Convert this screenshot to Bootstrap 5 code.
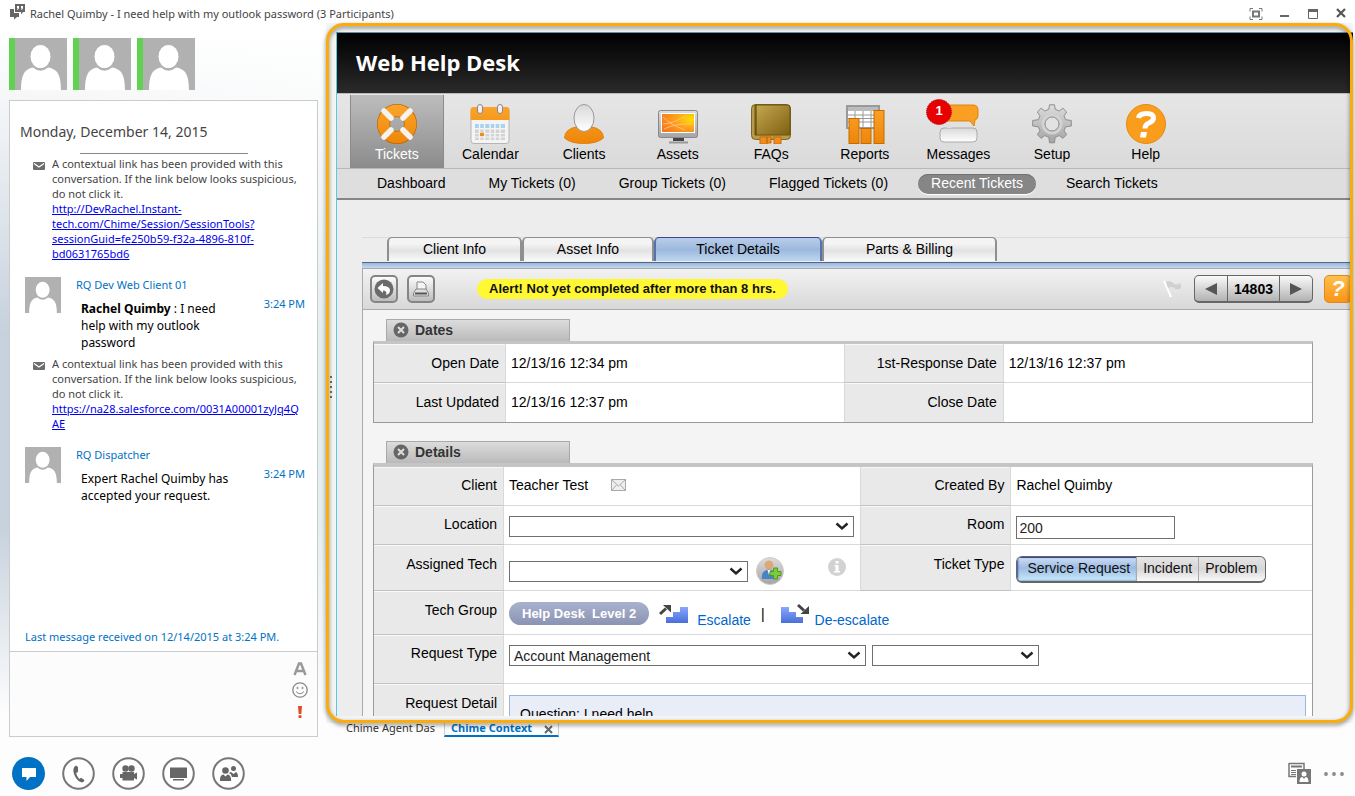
<!DOCTYPE html>
<html lang="en">
<head>
<meta charset="utf-8">
<meta name="viewport" content="width=device-width, initial-scale=1">
<title>Rachel Quimby - I need help with my outlook password</title>
<link href="https://cdn.jsdelivr.net/npm/bootstrap@5.3.0/dist/css/bootstrap.min.css" rel="stylesheet">
<style>
  body {
    font: 12px/15px "Noto Sans", "Open Sans", sans-serif; color: #444;
    background:
      linear-gradient(180deg, #fff 4%, rgba(255,255,255,.75) 15%, rgba(255,255,255,0) 42%, rgba(255,255,255,0) 66%, #fdfdfd 90%),
      linear-gradient(90deg, #c6d1dd 0, #e8efef 330px);
  }
  .win-title { height: 23px; padding: 4px 8px 0 10px; }
  .win-title .caption { font-size: 11px; line-height: 19px; }
  .bare { background: none; border: 0; padding: 0; line-height: 0; color: #666; }
  .bare svg, .tool svg { display: block; }

  /* conversation column */
  .chat-col { flex: 0 0 318px; padding: 15px 0 0 9px; margin-right: 8px; }
  .presence { width: 58px; height: 52px; border-left: 6px solid #5fd24f; background: #b1b1b1; }
  .chat-box { margin-top: 10px; border: 1px solid #c9cbcd; background: #fff; }
  .chat-date { font-size: 14px; line-height: 20px; padding: 21px 10px 11px; }
  .chat-rule { width: 168px; margin-left: 70px; border-top: 1px solid #8a8a8a; }
  .notice { padding: 2px 12px 0 23px; font-size: 11px; }
  .notice > svg { flex: none; margin: 6px 7px 0 0; }
  .notice a { color: #00e; overflow-wrap: anywhere; }
  .msg { padding: 16px 12px 3px 15px; }
  .msg > svg { flex: none; background: #b1b1b1; }
  .msg .who { color: #0072c6; line-height: 16px; margin-left: 15px; font-size: 11px; }
  .msg .said { color: #000; line-height: 17px; margin: 7px 0 0 20px; }
  .msg .when { color: #0072c6; line-height: 16px; margin-top: 19px; font-size: 11px; }
  .last-msg { color: #0072c6; padding: 0 15px 7px; font-size: 11px; }
  .compose { height: 85px; border-top: 1px solid #c9cbcd; background: #fcfcfc; padding: 7px 8px 0 0; }
  .compose textarea { border: 0; background: none; resize: none; outline: 0; }

  /* highlighted context pane */
  .context { padding: 9px 0 0 10px; margin-right: 2px; background: #f4f5f5; }
  .context::after {
    content: ""; position: absolute; inset: 0; border: 3px solid #fbac0b; border-radius: 18px;
    filter: drop-shadow(0 2px 2px rgba(0,0,0,.5)); pointer-events: none;
  }
  .grip { position: absolute; left: 4px; top: 353px; z-index: 2; }
  .desk {
    font: 14px/16px "Liberation Sans", Arial, sans-serif; color: #000; background: #ededed;
    border-top: 1px solid #5f93ad; border-left: 1px solid #5cc8e0; margin-bottom: 7px;
  }
  .desk-head { height: 60px; background: linear-gradient(#000, #2a2a2a); padding-left: 19px; }
  .desk-head h1 { font: bold 22px/58px "Open Sans", "Noto Sans", sans-serif; color: #fff; margin: 0; }
  .desk-nav { height: 76px; padding: 1px 0 0 13px; background: linear-gradient(#e6e6e6, #dadada); border-top: 1px solid #bbb; border-bottom: 1px solid #b8b8b8; }
  .desk-nav ul { display: grid; grid-template-columns: repeat(9, 1fr); width: 84%; height: 100%; }
  .desk-nav a { display: flex; flex-direction: column; align-items: center; height: 100%; padding-top: 9px; color: #000; text-decoration: none; }
  .desk-nav a span { margin-top: 2px; }
  .desk-nav a.active { color: #fff; background: linear-gradient(#bdbdbd, #8b8b8b); border: 1px solid #8b8b8b; border-width: 0 1px; }
  .msg-icon { margin-right: 12px; overflow: visible; }
  .desk-sub { height: 31px; padding: 5px 0 0 27px; background: #dedede; border-bottom: 2px solid #868686; gap: 17px; }
  .desk-sub a { color: #000; text-decoration: none; padding: 1px 13px 3px; height: 20px; white-space: nowrap; }
  .desk-sub a.active { color: #fff; background: #868686; border-radius: 10px; box-shadow: 0 1px 0 #fff, inset 0 1px 0 #6f6f6f; }

  .sheet-wrap { margin: 37px 0 0 25px; }
  .sheet-tabs { height: 25px; border-top: 1px solid #dcdcdc; padding-left: 25px; }
  .sheet-tabs a {
    height: 24px; margin-top: -1px; line-height: 23px; text-align: center; color: #000; text-decoration: none;
    border: 2px solid #8f8f8f; border-bottom: 0; border-top-width: 1px; border-radius: 5px 5px 0 0;
    background: linear-gradient(#f4f4f4 0 25%, #e2e2e2 55%, #fafafa);
  }
  .sheet-tabs a.active { border-color: #35489b #5573ab; background: linear-gradient(#b9cde8, #9db8de 50%, #bcd6f0); }
  .w-a { width: 135px; } .w-b { width: 132px; } .w-c { width: 168px; } .w-d { width: 175px; }
  .blue-rule { height: 6px; border-top: 1px solid #56687f; background: linear-gradient(#9bb5dc, #c3dbee); }
  .sheet { border-left: 1px solid #aaa; background: #f4f4f4; }
  .tools { height: 42px; padding: 0 1px 1px 7px; border-top: 1px solid #aaa; border-bottom: 1px solid #aaa; background: linear-gradient(#f2f2f2, #d8d8d8); }
  .tool { width: 28px; height: 28px; padding: 0; display: flex; align-items: center; justify-content: center; border: 2px solid #858585; border-radius: 5px; background: linear-gradient(#fcfcfc, #bdbdbd); }
  .tool-help { border: 1px solid #d98a1c; background: linear-gradient(#ffc04d, #fb9416); color: #fff; font: italic bold 22px/26px "Liberation Sans", sans-serif; }
  .alert-pill { background: #fff833; border-radius: 10px; color: #111; font-weight: bold; font-size: 13px; line-height: 20px; padding: 0 12px; margin-left: 42px; white-space: nowrap; }
  .pager { height: 28px; border: 1px solid #666; border-bottom-width: 2px; border-radius: 5px; background: linear-gradient(#fafafa, #b2b2b2); overflow: hidden; }
  .pager button { width: 32px; border: 0; background: none; padding: 0; }
  .pager span { width: 53px; border: 1px solid #666; border-width: 0 1px; text-align: center; font-weight: bold; line-height: 26px; }

  .sheet-body { padding: 9px 40px 0 10px; }
  .block-head { width: 184px; height: 22px; margin-left: 13px; padding: 2px 6px 0; border: 1px solid #aaa; border-bottom: 0; background: linear-gradient(#dcdcdc, #bababa); }
  .block-head h2 { font: bold 14px/16px "Liberation Sans", sans-serif; color: #333; margin: 0 0 0 6px; }
  .facts { table-layout: fixed; width: 100%; border-collapse: separate; border-spacing: 0; background: #fff; border: 1px solid #9a9a9a; border-top: 3px solid #c5c5c5; margin-bottom: 18px; }
  .facts.thick { border-top-width: 4px; }
  .facts th, .facts td { vertical-align: top; padding: 10px 6px 0 6px; border-bottom: 1px solid #d9d9d9; font-weight: normal; }
  .facts th { text-align: right; background: #e9e9e9; border-right: 1px solid #d9d9d9; border-bottom-color: #c2c2c2; box-shadow: inset 0 1px 0 #f8f8f8; }
  .facts td + th { border-left: 1px solid #d9d9d9; }
  .facts tr:last-child > * { border-bottom: 0; }
  .facts td { padding-left: 5px; }
  .facts .low > * { padding-top: 11px; }
  .h39 { height: 39px; } .h46 { height: 46px; } .h44 { height: 44px; } .h49 { height: 49px; }
  .l1 { width: 132px; } .v1 { width: 36%; } .l2 { width: 160px; }
  .l3 { width: 130px; } .v3 { width: 38%; } .l4 { width: 151px; }
  .pick {
    appearance: none; height: 21px; padding: 0 4px; border: 1px solid #707070; border-radius: 0; color: #222; font-size: 14px; line-height: 18px;
    background: #fff url("data:image/svg+xml,%3Csvg xmlns='http://www.w3.org/2000/svg' width='14' height='9'%3E%3Cpath d='M1.500 1.500l5.500 5 5.500-5' fill='none' stroke='%23222' stroke-width='2.400'/%3E%3C/svg%3E") no-repeat right 4px center;
    display: block;
  }
  .room { width: 159px; height: 23px; border: 1px solid #707070; padding: 0 2px; color: #222; }
  .kinds { height: 27px; border: 1px solid #666; border-bottom-width: 2px; border-radius: 6px; overflow: hidden; background: linear-gradient(#e6e6e6, #d6d6d6 50%, #fafafa); }
  .kinds label { line-height: 22px; padding: 0 6px; border-left: 1px solid #aaa; color: #111; cursor: pointer; }
  .kinds label:first-of-type { border-left: 0; padding-left: 10px; }
  .kinds .btn-check:checked + label { background: linear-gradient(#cfdff3, #9dbbe3 45%, #c6eafa); box-shadow: inset 0 1px 0 #35489b, inset 1px 0 2px #35489b; }
  .group-pill { background: linear-gradient(#a9b2cd, #8a94b2); color: #fff; font-weight: bold; font-size: 13px; line-height: 23px; border-radius: 12px; padding: 0 13px; white-space: pre; }
  .steps a { color: #0066cc; text-decoration: none; margin-top: 10px; }
  .question { border: 1px solid #9cb6dc; background: #e9edf7; height: 60px; padding: 10px; }

  .page-tabs { height: 14px; font-size: 11px; color: #333; padding-left: 20px; line-height: 10px; }
  .page-tabs .on { color: #0072c6; font-weight: bold; border-bottom: 2px solid #0072c6; border-left: 1px solid #ccc; border-right: 1px solid #ccc; padding: 0 5px 0 6px; margin-left: 9px; }
  .page-tabs a { color: inherit; text-decoration: none; }
  .call-bar { height: 59px; padding: 12px 11px 0 12px; }
  .defs { width: 0; height: 0; }
</style>
</head>
<body class="d-flex flex-column vh-100 overflow-hidden">

<svg class="defs position-absolute" aria-hidden="true">
  <defs>
    <linearGradient id="gOr" gradientUnits="userSpaceOnUse" x1="0" y1="0" x2="0" y2="40"><stop offset="0" stop-color="#fba62c"/><stop offset="1" stop-color="#ee8508"/></linearGradient>
    <linearGradient id="gGold" x1="0" y1="0" x2="1" y2="1"><stop offset="0" stop-color="#c6a94f"/><stop offset="1" stop-color="#7d5f12"/></linearGradient>
    <linearGradient id="gGrey" x1="0" y1="0" x2="0" y2="1"><stop offset="0" stop-color="#ddd"/><stop offset="1" stop-color="#a4a4a4"/></linearGradient>
    <linearGradient id="gWh" x1="0" y1="0" x2="0" y2="1"><stop offset="0" stop-color="#d9d9d9"/><stop offset="1" stop-color="#fff"/></linearGradient>
    <radialGradient id="gScr" cx=".9" cy=".3" r="1"><stop offset="0" stop-color="#ffe000"/><stop offset=".5" stop-color="#ff9d1c"/><stop offset="1" stop-color="#f57a20"/></radialGradient>
    <linearGradient id="gBl" x1="0" y1="0" x2="0" y2="1"><stop offset="0" stop-color="#86a8ff"/><stop offset="1" stop-color="#4a6fd8"/></linearGradient>
    <symbol id="person" viewBox="0 0 52 52"><ellipse cx="25.500" cy="18.500" rx="10" ry="11.500" fill="#fff"/><path d="M6 52C6 36 10 31 18 29.500Q25.500 36 33 29.500C42 31 46 36 46 52z" fill="#fff"/></symbol>
    <symbol id="mail" viewBox="0 0 12 8"><rect width="12" height="8" rx="1" fill="#6d6d6d"/><path d="M1 1.500L6 5l5-3.500" fill="none" stroke="#fff" stroke-width="1.200"/></symbol>
    <symbol id="shut" viewBox="0 0 16 16"><circle cx="8" cy="8" r="7.500" fill="#666"/><path d="M5 5l6 6M11 5l-6 6" stroke="#ddd" stroke-width="2"/></symbol>
  </defs>
</svg>

<header class="win-title d-flex justify-content-between flex-shrink-0">
  <div class="d-flex">
    <svg width="16" height="16" viewBox="0 0 16 16" class="me-1" fill="#666"><path d="M5 0h10v8h-2l-2 2.500V8H5z"/><path d="M0 5h4v4h5v4H7l-3 2.500V13H0z"/><path d="M7 2h2v2.500L7.500 6H7l.8-1.800H7zM11 2h2v2.500L11.500 6H11l.8-1.800H11z" fill="#fff"/></svg>
    <span class="caption">Rachel Quimby - I need help with my outlook password (3 Participants)</span>
  </div>
  <div class="d-flex align-items-center gap-3">
    <button class="bare" aria-label="Full screen"><svg width="14" height="12" viewBox="0 0 14 12" fill="none" stroke="#777"><path d="M1 3.500v-3h3M10 .5h3v3M13 8.500v3h-3M4 11.500H1v-3"/><rect x="4" y="3.500" width="6" height="5" stroke-width="2"/></svg></button>
    <button class="bare" aria-label="Minimize"><svg width="12" height="12" viewBox="0 0 12 12"><path d="M1 7h9v2H1z" fill="#666"/></svg></button>
    <button class="bare" aria-label="Maximize"><svg width="12" height="12" viewBox="0 0 12 12"><path d="M1.500 2v8.500h9V2" fill="none" stroke="#666"/><path d="M1 1h10v3H1z" fill="#666"/></svg></button>
    <button class="bare" aria-label="Close"><svg width="12" height="12" viewBox="0 0 12 12"><path d="M2 1l8 8M10 1l-8 8" stroke="#555" stroke-width="2.200"/></svg></button>
  </div>
</header>

<main class="d-flex flex-grow-1" style="min-height:0">
  <section class="chat-col d-flex flex-column">
    <div class="d-flex" style="gap:6px">
      <div class="presence"><svg width="52" height="52"><use href="#person"/></svg></div>
      <div class="presence"><svg width="52" height="52"><use href="#person"/></svg></div>
      <div class="presence"><svg width="52" height="52"><use href="#person"/></svg></div>
    </div>
    <div class="chat-box d-flex flex-column flex-grow-1">
      <div class="flex-grow-1">
        <div class="chat-date">Monday, December 14, 2015</div>
        <div class="chat-rule"></div>
        <div class="notice d-flex"><svg width="12" height="8"><use href="#mail"/></svg>
          <div>A contextual link has been provided with this conversation. If the link below looks suspicious, do not click it.<br><a href="#">http://DevRachel.Instant-<wbr>tech.com/Chime/Session/SessionTools?<wbr>sessionGuid=fe250b59-f32a-4896-810f-bd0631765bd6</a></div>
        </div>
        <div class="msg d-flex"><svg width="36" height="36"><use href="#person"/></svg>
          <div class="flex-grow-1"><div class="who">RQ Dev Web Client 01</div><div class="said"><b>Rachel Quimby</b> : I need help with my outlook password</div></div>
          <div class="when text-nowrap ms-4">3:24 PM</div>
        </div>
        <div class="notice d-flex"><svg width="12" height="8"><use href="#mail"/></svg>
          <div>A contextual link has been provided with this conversation. If the link below looks suspicious, do not click it.<br><a href="#">https://na28.salesforce.com/0031A00001zyJq4Q<wbr>AE</a></div>
        </div>
        <div class="msg d-flex"><svg width="36" height="36"><use href="#person"/></svg>
          <div class="flex-grow-1"><div class="who">RQ Dispatcher</div><div class="said">Expert Rachel Quimby has accepted your request.</div></div>
          <div class="when text-nowrap ms-4">3:24 PM</div>
        </div>
      </div>
      <div class="last-msg">Last message received on 12/14/2015 at 3:24 PM.</div>
      <div class="compose d-flex">
        <textarea class="flex-grow-1" aria-label="Message"></textarea>
        <div class="d-flex flex-column align-items-center gap-1">
          <button class="bare" aria-label="Font"><svg width="18" height="18" viewBox="0 0 18 18"><path d="M3.500 16L8 4.500h2L14.500 16M5.500 12h7" fill="none" stroke="#999" stroke-width="2.500"/></svg></button>
          <button class="bare" aria-label="Emoticons"><svg width="18" height="18" viewBox="0 0 18 18" fill="none" stroke="#888"><circle cx="9" cy="9" r="7.200" stroke-width="1.300"/><path d="M5 10.500q4 4.500 8 0"/><circle cx="6.500" cy="7" r=".7"/><circle cx="11.500" cy="7" r=".7"/></svg></button>
          <button class="bare" aria-label="Important"><svg width="18" height="18" viewBox="0 0 18 18" fill="#dc4a26"><path d="M7 3h4l-.7 8H7.700zM7.500 12.300h3v2.700h-3z"/></svg></button>
        </div>
      </div>
    </div>
  </section>

  <div class="d-flex flex-column flex-grow-1" style="min-width:0">
    <section class="context position-relative flex-grow-1 d-flex flex-column" style="min-height:0">
      <svg class="grip" width="3" height="23" fill="#666"><path d="M0 0h2v2H0zM0 5h2v2H0zM0 10h2v2H0zM0 15h2v2H0zM0 20h2v2H0z"/></svg>
      <div class="desk flex-grow-1 overflow-hidden">
        <div class="desk-head"><h1>Web Help Desk</h1></div>
        <nav class="desk-nav">
          <ul class="list-unstyled mb-0">
            <li><a href="#" class="active"><svg width="40" height="40" viewBox="0 0 40 40"><circle cx="20" cy="20" r="13.500" fill="none" stroke="#c36a00" stroke-width="13"/><circle cx="20" cy="20" r="13.500" fill="none" stroke="url(#gOr)" stroke-width="11.500"/><path d="M7 7l7 7M33 7l-7 7M7 33l7-7M33 33l-7-7" stroke="#f6f2ee" stroke-width="5.500" stroke-linecap="round"/></svg><span>Tickets</span></a></li>
            <li><a href="#"><svg width="40" height="40" viewBox="0 0 40 40"><rect x="1" y="4" width="38" height="35.500" rx="3" fill="#f4f4f4" stroke="#b5b5b5"/><path d="M.5 16V6q0-3 3-3h33q3 0 3 3v10z" fill="url(#gOr)"/><path d="M5 20h30v4H5z" fill="#a8d2ee"/><path d="M5 25.500h30v3.500H5zM5 30h30v2.500H5zM5 33.500h30V36H5z" fill="#d3d3d3"/><path d="M9.500 19v17M14.500 19v17M20 19v17M25 19v17M30 19v17" stroke="#f4f4f4" stroke-width="1.500"/><path d="M10 29h4v3h-4z" fill="#f28c14"/><g fill="#eef" stroke="#888"><rect x="7.500" y=".5" width="5" height="9" rx="2.500"/><rect x="27.500" y=".5" width="5" height="9" rx="2.500"/></g></svg><span>Calendar</span></a></li>
            <li><a href="#"><svg width="40" height="40" viewBox="0 0 40 40"><path d="M.5 34Q1 25 12 23q8 7 16 0 11 2 11.500 11-6 5.500-19.500 5.500T.5 34z" fill="url(#gOr)" stroke="#e08010"/><ellipse cx="20" cy="14" rx="10" ry="13.500" fill="url(#gWh)" stroke="#999"/></svg><span>Clients</span></a></li>
            <li><a href="#"><svg width="40" height="40" viewBox="0 0 40 40"><rect x=".5" y="6.500" width="39" height="27" rx="2" fill="url(#gGrey)" stroke="#888"/><rect x="3.500" y="9.500" width="33" height="19" fill="url(#gScr)" stroke="#fff"/><path d="M5 20q10 0 24-9M6 25q12-6 28-5M5 13q8 8 22 13" stroke="#ffc98a" fill="none" opacity=".8"/><path d="M15 34h11v3H15z" fill="#444"/><path d="M11 37.500h19v2H11z" fill="#999"/></svg><span>Assets</span></a></li>
            <li><a href="#"><svg width="40" height="40" viewBox="0 0 40 40"><rect x=".5" y=".5" width="39" height="35" rx="4" fill="#b89b48" stroke="#7d6526"/><path d="M4 1h32q3 0 3 3v27H4z" fill="url(#gGold)" stroke="#6b5210"/><path d="M5 1v30" stroke="#4f3a08"/><path d="M9 33h7v7H9zM16 33h4v6h-4zM23 33h7v7h-7z" fill="#f08c1e" stroke="#c96c08"/></svg><span>FAQs</span></a></li>
            <li><a href="#"><svg width="40" height="40" viewBox="0 0 40 40"><rect x="2" y="2" width="32" height="22" fill="#fff" stroke="#999" stroke-width="2"/><path d="M3 5h30" stroke="#bbb" stroke-width="4"/><path d="M3 11h30M3 14.500h30M3 18h30M10 7v16M18 7v16M26 7v16" stroke="#999"/><g fill="url(#gOr)" stroke="#c56a00"><rect x="4" y="14.500" width="10" height="25"/><rect x="16" y="24.500" width="10" height="15"/><rect x="29" y="6.500" width="10" height="33"/></g></svg><span>Reports</span></a></li>
            <li><a href="#"><svg width="54" height="40" viewBox="0 0 54 40" class="msg-icon"><path d="M20 1h28q5 0 5 5v6q0 3-3 4l-1 6-4-5H20z" fill="#fa9f22" stroke="#df8510"/><path d="M19 24h29q4 0 4 4v6q0 4-4 4H19q-4 0-4-4v-6q0-4 4-4z" fill="url(#gWh)" stroke="#aaa"/><path d="M22 24v-5l5 5z" fill="#ddd"/><circle cx="14" cy="8" r="12.500" fill="#e80000" stroke="#a00" stroke-dasharray="1 1"/><text x="14" y="11" text-anchor="middle" fill="#fff" font-size="13" font-weight="bold">1</text></svg><span>Messages</span></a></li>
            <li><a href="#"><svg width="40" height="40" viewBox="0 0 40 40"><path d="M16.800 5.300L17.500.8h5l.7 4.500 4 1.700 3.700-2.700 3.800 3.700-2.700 3.800 1.600 3.900 5.700.8v5.500l-5.700.8-1.600 4 2.700 3.800-3.800 3.700-3.700-2.700-4 1.700-.7 5.500h-5l-.7-5.500-4-1.700-3.700 2.700-3.800-3.700L8 26.800l-1.600-4-5.700-.8v-5.500l5.700-.8L8 11.800 5.300 8l3.800-3.700L12.800 7z" fill="url(#gGrey)" stroke="#8e8e8e"/><circle cx="20" cy="20" r="9" fill="none" stroke="#d2d2d2" stroke-width="3"/><circle cx="20" cy="20" r="7" fill="#e2e2e2" stroke="#8e8e8e"/></svg><span>Setup</span></a></li>
            <li><a href="#"><svg width="40" height="40" viewBox="0 0 40 40"><circle cx="20" cy="20" r="19.500" fill="#fa9d1c" stroke="#e38a10"/><path d="M12.500 14q1-4.500 8-4.500t7 4.500q0 3-4.500 5-4 1.500-4 5.500" fill="none" stroke="#fff" stroke-width="5"/><path d="M15 28h6l-1 5.500h-6z" fill="#fff"/></svg><span>Help</span></a></li>
          </ul>
        </nav>
        <nav class="desk-sub d-flex">
          <a href="#">Dashboard</a><a href="#">My Tickets (0)</a><a href="#">Group Tickets (0)</a><a href="#">Flagged Tickets (0)</a><a href="#" class="active">Recent Tickets</a><a href="#">Search Tickets</a>
        </nav>

        <div class="sheet-wrap">
          <nav class="sheet-tabs d-flex">
            <a href="#" class="w-a">Client Info</a><a href="#" class="w-b">Asset Info</a><a href="#" class="w-c active">Ticket Details</a><a href="#" class="w-d">Parts &amp; Billing</a>
          </nav>
          <div class="blue-rule"></div>
          <div class="sheet">
            <div class="tools d-flex align-items-center">
              <button class="tool" aria-label="Back"><svg width="22" height="22" viewBox="0 0 22 22"><circle cx="11" cy="11" r="9.500" fill="#6b6b6b"/><path d="M4.500 10L10 5v3q7 0 7 4.500 0 3-4 4.500 1.500-4.500-3-4.500V15z" fill="#fff"/></svg></button>
              <button class="tool" style="margin-left:9px" aria-label="Print"><svg width="18" height="20" viewBox="0 0 18 20"><path d="M5 11V3h6l3 3v5" fill="#f4f4f4" stroke="#888"/><path d="M4 10l-2.500 4v3h15v-3L14 10z" fill="#ddd" stroke="#888"/><path d="M3 14.500h12" stroke="#555" stroke-width="2"/></svg></button>
              <div class="alert-pill">Alert! Not yet completed after more than 8 hrs.</div>
              <svg class="ms-auto" width="18" height="18" viewBox="0 0 18 18"><path d="M1 1l7 16" stroke="#fff" stroke-width="2"/><path d="M3 2q4-2 7 1t7 0q2 4 0 6-4 1-6-1t-6 0z" fill="#d0d0d0"/></svg>
              <div class="pager d-flex" style="margin-left:13px">
                <button aria-label="Previous ticket"><svg width="12" height="12" viewBox="0 0 12 12"><path d="M12 0v12L0 6z" fill="#555"/></svg></button>
                <span>14803</span>
                <button aria-label="Next ticket"><svg width="12" height="12" viewBox="0 0 12 12"><path d="M0 0v12l12-6z" fill="#555"/></svg></button>
              </div>
              <button class="tool tool-help" style="margin-left:11px" aria-label="Help">?</button>
            </div>

            <div class="sheet-body">
              <div class="block-head d-flex"><svg width="16" height="16"><use href="#shut"/></svg><h2>Dates</h2></div>
              <table class="facts">
                <colgroup><col class="l1"><col class="v1"><col class="l2"><col></colgroup>
                <tr class="h39 low"><th>Open Date</th><td>12/13/16 12:34 pm</td><th>1st-Response Date</th><td>12/13/16 12:37 pm</td></tr>
                <tr class="h39 low"><th>Last Updated</th><td>12/13/16 12:37 pm</td><th>Close Date</th><td></td></tr>
              </table>

              <div class="block-head d-flex"><svg width="16" height="16"><use href="#shut"/></svg><h2>Details</h2></div>
              <table class="facts thick">
                <colgroup><col class="l3"><col class="v3"><col class="l4"><col></colgroup>
                <tr class="h39"><th>Client</th><td><div class="d-flex align-items-center">Teacher Test <svg style="margin-left:23px" width="15" height="12" viewBox="0 0 15 12"><rect x=".5" y=".5" width="14" height="11" fill="#eee" stroke="#aaa"/><path d="M1 1l6.500 6L14 1M1 11l4.500-5M14 11L9.500 6" fill="none" stroke="#aaa"/></svg></div></td><th>Created By</th><td>Rachel Quimby</td></tr>
                <tr class="h39"><th><label for="loc">Location</label></th><td><select id="loc" class="pick w-100"><option></option></select></td><th><label for="room">Room</label></th><td><input id="room" class="room" value="200"></td></tr>
                <tr class="h46 low"><th><label for="tech">Assigned Tech</label></th><td>
                  <div class="d-flex align-items-center">
                    <select id="tech" class="pick" style="width:239px"><option></option></select>
                    <button class="bare ms-2" aria-label="Assign"><svg width="28" height="30" viewBox="0 0 28 30"><circle cx="14" cy="15" r="13.500" fill="url(#gGrey)" stroke="#ccc"/><circle cx="13" cy="9" r="4.500" fill="#dca877"/><path d="M6 23q-1-9 7-9.500 7 0 7 9.500z" fill="#4a83c4"/><path d="M11.500 14h3l-1.500 5z" fill="#fff"/><path d="M17.500 12h4v3.500H25v4h-3.500V23h-4v-3.500H14v-4h3.500z" fill="#7ccc3c" stroke="#4f9a20"/></svg></button>
                    <svg class="ms-auto mb-2 me-2" width="18" height="18" viewBox="0 0 18 18"><circle cx="9" cy="9" r="9" fill="#d2d2d2"/><path d="M7.500 3h3v2.500h-3zM6.500 7h4v6h1.500v1.500h-6V13h1.500V8.500H6.500z" fill="#fff"/></svg>
                  </div></td><th>Ticket Type</th><td>
                  <div class="kinds d-inline-flex">
                    <input type="radio" class="btn-check" name="kind" id="k1" checked><label for="k1">Service Request</label>
                    <input type="radio" class="btn-check" name="kind" id="k2"><label for="k2">Incident</label>
                    <input type="radio" class="btn-check" name="kind" id="k3"><label for="k3" class="pe-2">Problem</label>
                  </div></td></tr>
                <tr class="h44 low"><th>Tech Group</th><td colspan="3">
                  <div class="d-flex align-items-start steps">
                    <span class="group-pill">Help Desk  Level 2</span>
                    <svg style="margin-left:10px" width="30" height="22" viewBox="0 0 30 22"><path d="M7 21v-6h7v-5h7V5h8v16z" fill="url(#gBl)"/><path d="M1 12l6-5.500" stroke="#444" stroke-width="3"/><path d="M4 3h8v7.500z" fill="#444"/></svg>
                    <a href="#" class="ms-2">Escalate</a><span style="margin-left:10px" class="mt-1">|</span>
                    <svg style="margin-left:15px" width="30" height="22" viewBox="0 0 30 22"><path d="M1 21V5h8v5h7v5h7v6z" fill="url(#gBl)"/><path d="M18 3l6 5.500" stroke="#444" stroke-width="3"/><path d="M29 4v8h-8.500z" fill="#444"/></svg>
                    <a href="#" style="margin-left:5px">De-escalate</a>
                  </div></td></tr>
                <tr class="h49"><th><label for="rtype">Request Type</label></th><td colspan="3"><div class="d-flex" style="gap:6px"><select id="rtype" class="pick" style="width:357px"><option>Account Management</option></select><select class="pick" style="width:167px" aria-label="Request subtype"><option></option></select></div></td></tr>
                <tr class="low"><th>Request Detail</th><td colspan="3"><div class="question">Question: I need help</div></td></tr>
              </table>
            </div>
          </div>
        </div>
      </div>
    </section>
    <nav class="page-tabs d-flex flex-shrink-0">
      <a href="#">Chime Agent Das</a>
      <div class="on d-flex"><a href="#">Chime Context</a><button class="bare" style="margin-left:12px" aria-label="Close tab"><svg width="9" height="9" viewBox="0 0 9 9"><path d="M1 1l7 7M8 1L1 8" stroke="#666" stroke-width="2"/></svg></button></div>
    </nav>
  </div>
</main>

<footer class="call-bar d-flex justify-content-between flex-shrink-0">
  <div class="d-flex" style="gap:17px">
    <button class="bare" aria-label="IM"><svg width="33" height="46" viewBox="0 -7 33 46"><circle cx="16.500" cy="16.500" r="16.500" fill="#0072c6"/><path d="M10 11h14v9h-6l-3.500 4v-4H10z" fill="#fff"/></svg></button>
    <button class="bare" aria-label="Call"><svg width="33" height="46" viewBox="0 -7 33 46"><circle cx="16.500" cy="16.500" r="15.300" fill="#fff" stroke="#777" stroke-width="2"/><path d="M14 8.500q-4 2-2 8.500 2.500 7 8 8.500 2-.5 2.500-2.500l-3.500-2.200-1.700 1.200q-2.500-2.500-3.200-6l1.900-1V10z" fill="#666"/></svg></button>
    <button class="bare" aria-label="Video"><svg width="33" height="46" viewBox="0 -7 33 46"><circle cx="16.500" cy="16.500" r="15.300" fill="#fff" stroke="#777" stroke-width="2"/><g fill="#666"><circle cx="13.500" cy="11.500" r="3.200"/><circle cx="19.500" cy="11.500" r="3.200"/><path d="M10.500 15H22v2l3-1.500v7L22 21v2.500H10.500V21H8v-4h2.500z"/></g></svg></button>
    <button class="bare" aria-label="Present"><svg width="33" height="46" viewBox="0 -7 33 46"><circle cx="16.500" cy="16.500" r="15.300" fill="#fff" stroke="#777" stroke-width="2"/><path d="M8 10.500h17v10.500H8zM11 22h11v1.500H11z" fill="#666"/></svg></button>
    <button class="bare" aria-label="Participants"><svg width="33" height="46" viewBox="0 -7 33 46"><circle cx="16.500" cy="16.500" r="15.300" fill="#fff" stroke="#777" stroke-width="2"/><g fill="#666"><circle cx="13.500" cy="13.500" r="3.300"/><path d="M8 24q-.5-6 3.500-6.500l2 2 2-2q4 .5 3.500 6.500z"/><circle cx="21.500" cy="11.500" r="2.500"/><path d="M19 15l2.500 2 2.500-2q2 1 2 5h-6q-.5-3-3-4z"/></g></svg></button>
  </div>
  <div class="d-flex">
    <button class="bare" style="margin-right:13px" aria-label="Contact card"><svg width="23" height="46" viewBox="0 -12 23 46"><path d="M1 1.500h15v6M8 14.500H1V1" fill="none" stroke="#777" stroke-width="1.500"/><path d="M3 3.500h11v2H3zM3 8h5v1H3zM3 10h5v1H3zM3 12h5v1H3z" fill="#777"/><path d="M9 7h14v15H9z" fill="#777"/><circle cx="16" cy="12" r="2.500" fill="#fff"/><path d="M11.500 20q0-5 3-5l1.500 2 1.500-2q3 0 3 5z" fill="#fff"/></svg></button>
    <button class="bare" aria-label="More options"><svg width="20" height="46" viewBox="0 -12 20 46" fill="#888"><circle cx="2" cy="12" r="1.900"/><circle cx="10" cy="12" r="1.900"/><circle cx="18" cy="12" r="1.900"/></svg></button>
  </div>
</footer>
<script src="https://cdn.jsdelivr.net/npm/bootstrap@5.3.0/dist/js/bootstrap.bundle.min.js"></script>
</body>
</html>
